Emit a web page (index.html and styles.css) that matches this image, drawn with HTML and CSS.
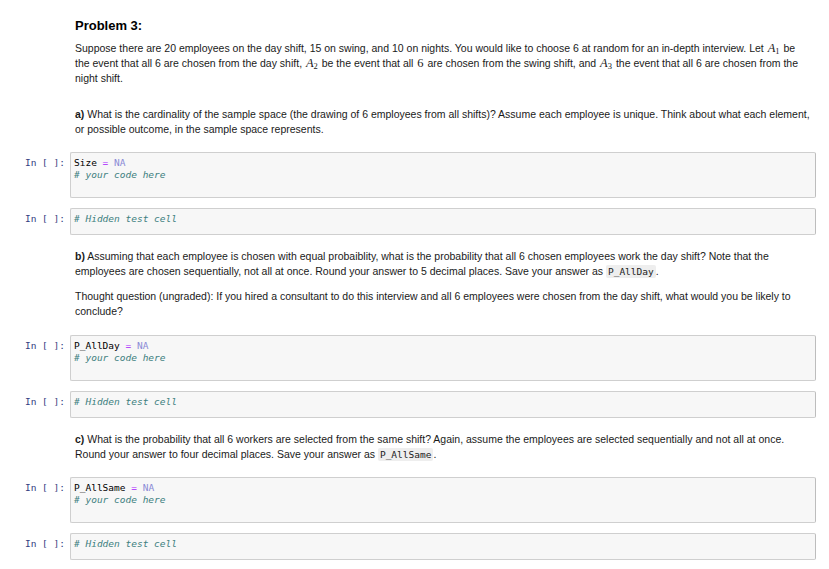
FILE: index.html
```html
<!DOCTYPE html>
<html lang="en">
<head>
<meta charset="utf-8">
<title>Problem 3</title>
<link rel="stylesheet" href="styles.css">
</head>
<body>
<div class="notebook">
  <div class="cell md md-first">
    <div class="prompt"></div>
    <div class="md-body">
      <h3 class="title">Problem 3:</h3>
      <p>Suppose there are 20 employees on the day shift, 15 on swing, and 10 on nights. You would like to choose 6 at random for an in-depth interview. Let <span class="math">A<sub>1</sub></span> be the event that all 6 are chosen from the day shift, <span class="math">A<sub>2</sub></span> be the event that all <span class="math num">6</span> are chosen from the swing shift, and <span class="math">A<sub>3</sub></span> the event that all 6 are chosen from the night shift.</p>
    </div>
  </div>

  <div class="cell md">
    <div class="prompt"></div>
    <div class="md-body">
      <p><b>a)</b> What is the cardinality of the sample space (the drawing of 6 employees from all shifts)? Assume each employee is unique. Think about what each element, or possible outcome, in the sample space represents.</p>
    </div>
  </div>

  <div class="cell code">
    <div class="prompt">In [ ]:</div>
    <div class="input"><pre class="src">Size <span class="op">=</span> <span class="na">NA</span>
<span class="cm"># your code here</span></pre></div>
  </div>

  <div class="cell code">
    <div class="prompt">In [ ]:</div>
    <div class="input short"><pre class="src"><span class="cm"># Hidden test cell</span></pre></div>
  </div>

  <div class="cell md md-b">
    <div class="prompt"></div>
    <div class="md-body">
      <p><b>b)</b> Assuming that each employee is chosen with equal probaiblity, what is the probability that all 6 chosen employees work the day shift? Note that the employees are chosen sequentially, not all at once. Round your answer to 5 decimal places. Save your answer as <code>P_AllDay</code>.</p>
      <p>Thought question (ungraded): If you hired a consultant to do this interview and all 6 employees were chosen from the day shift, what would you be likely to conclude?</p>
    </div>
  </div>

  <div class="cell code">
    <div class="prompt">In [ ]:</div>
    <div class="input"><pre class="src">P_AllDay <span class="op">=</span> <span class="na">NA</span>
<span class="cm"># your code here</span></pre></div>
  </div>

  <div class="cell code">
    <div class="prompt">In [ ]:</div>
    <div class="input short"><pre class="src"><span class="cm"># Hidden test cell</span></pre></div>
  </div>

  <div class="cell md">
    <div class="prompt"></div>
    <div class="md-body">
      <p><b>c)</b> What is the probability that all 6 workers are selected from the same shift? Again, assume the employees are selected sequentially and not all at once. Round your answer to four decimal places. Save your answer as <code>P_AllSame</code>.</p>
    </div>
  </div>

  <div class="cell code">
    <div class="prompt">In [ ]:</div>
    <div class="input"><pre class="src">P_AllSame <span class="op">=</span> <span class="na">NA</span>
<span class="cm"># your code here</span></pre></div>
  </div>

  <div class="cell code">
    <div class="prompt">In [ ]:</div>
    <div class="input short"><pre class="src"><span class="cm"># Hidden test cell</span></pre></div>
  </div>
</div>
</body>
</html>
```

FILE: styles.css
```css
html, body {
  margin: 0;
  padding: 0;
  background: #ffffff;
}

body {
  font-family: "Liberation Sans", Arial, sans-serif;
  font-size: 10.5px;
  color: #1a1a1a;
}

.notebook {
  display: flex;
  flex-direction: column;
  gap: 10px;
  padding: 12px 13px 0 0;
}

.cell {
  display: flex;
  flex-direction: row;
}

.prompt {
  flex: 0 0 70px;
  box-sizing: border-box;
  padding-right: 5px;
  text-align: right;
  font-family: "DejaVu Sans Mono", monospace;
  font-size: 9.5px;
  line-height: 12px;
  color: #34407f;
}

.code .prompt {
  padding-top: 5px;
}

.md-body {
  flex: 1 1 auto;
  padding: 4px 5px 5px 5px;
  line-height: 15px;
}

.md-first .md-body {
  padding-bottom: 7px;
}

.md-b .md-body {
  padding-bottom: 6.5px;
}

.title {
  margin: 2px 0 6.5px 0;
  font-size: 13px;
  line-height: 16px;
  font-weight: bold;
  color: #000000;
}

.md-body p {
  margin: 0 0 10px 0;
}

.md-body p:last-child {
  margin-bottom: 0;
}

.md-body b {
  font-weight: bold;
}

.math {
  font-family: "Liberation Serif", "Times New Roman", serif;
  font-style: italic;
  font-size: 12.5px;
  line-height: 1;
  padding: 0 1px;
}

.math sub {
  font-style: normal;
  font-size: 8.5px;
  line-height: 1;
  vertical-align: -2px;
}

.math.num {
  font-style: normal;
}

code {
  font-family: "DejaVu Sans Mono", monospace;
  font-size: 9.5px;
  background: #eeeeee;
  padding: 1px 2px;
  border-radius: 2px;
  color: #222222;
}

.input {
  flex: 1 1 auto;
  background: #f7f7f7;
  border: 1px solid #cfcfcf;
  border-right-color: #bdbdbd;
  border-radius: 2px;
  padding: 4px 3px 16px 3px;
}

.input.short {
  padding-bottom: 9px;
}

.src {
  margin: 0;
  font-family: "DejaVu Sans Mono", monospace;
  font-size: 9.5px;
  line-height: 12px;
  color: #000000;
  white-space: pre;
}

.op {
  color: #aa22ff;
}

.na {
  color: #8a8ad6;
}

.cm {
  color: #408080;
  font-style: italic;
}
```
